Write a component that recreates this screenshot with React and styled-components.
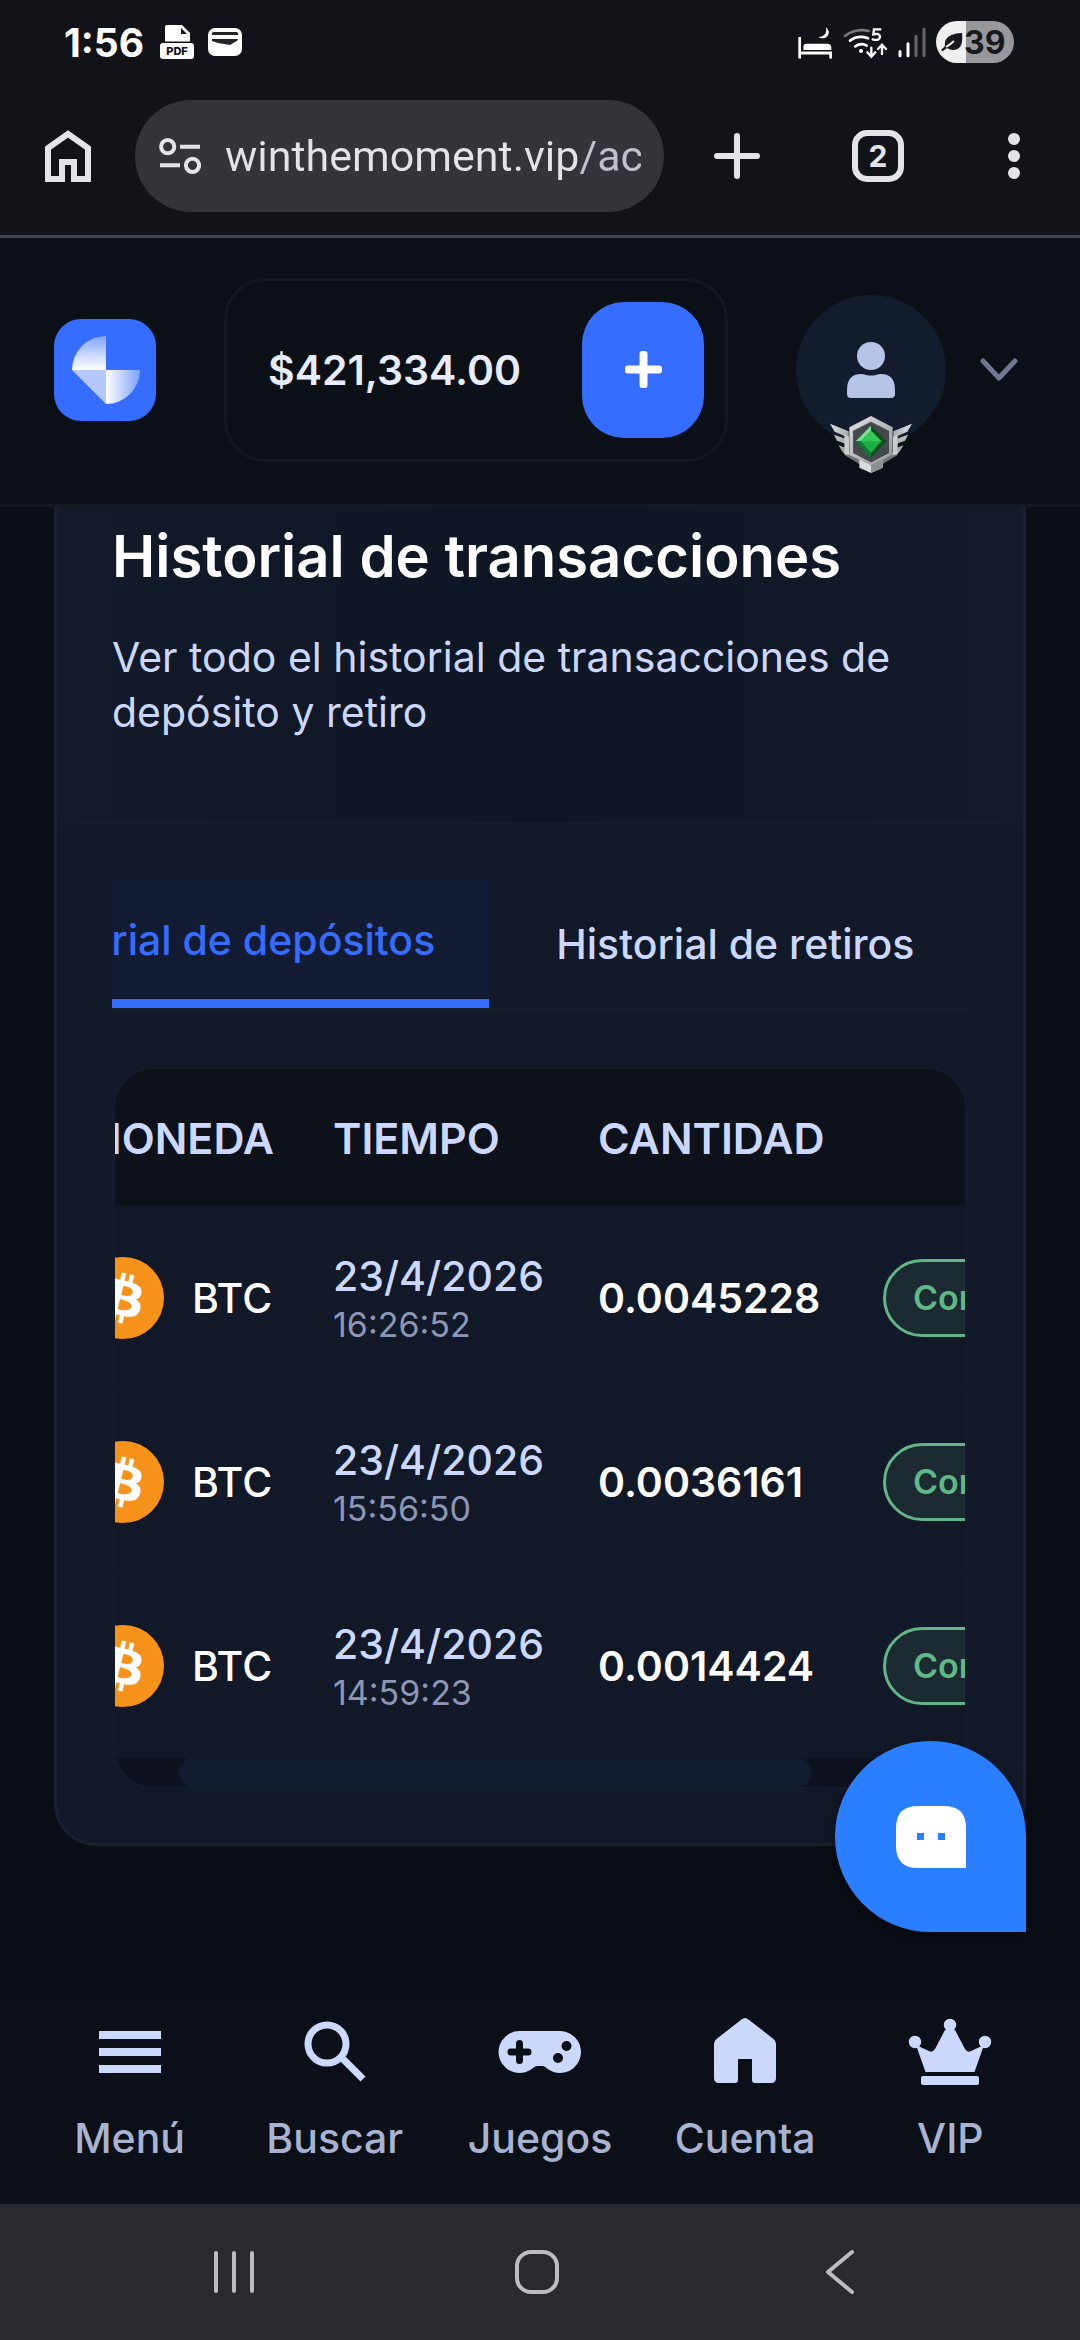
import React, { useLayoutEffect, useRef } from 'react'
import styled, { createGlobalStyle } from 'styled-components';

const GlobalStyle = createGlobalStyle`
  * {
    box-sizing: border-box;
  }

  body {
    background-color: #0a0e15;
    font-family: Inter, "Liberation Sans", sans-serif;
    margin: 0;
  }

  button, input {
    background: none;
    border: none;
    color: inherit;
    font: inherit;
    margin: 0;
    outline: none;
    padding: 0;
  }

  button {
    cursor: pointer;
  }

  svg {
    display: block;
    flex-shrink: 0;
  }
`;

const Page = styled.div`
  display: flex;
  flex-direction: column;
  min-height: 100vh;
`;

const BrowserTop = styled.div`
  background-color: #121318;
  border-bottom: 3px solid #44464f;
`;

const StatusBar = styled.div`
  align-items: center;
  color: #ffffff;
  display: flex;
  height: 84px;
  justify-content: space-between;
  padding: 0 66px 0 64px;

  & .group {
    align-items: center;
    display: flex;
    gap: 10px;
  }

  & .apps {
    gap: 14px;
  }

  & .time {
    font-size: 39px;
    font-weight: 700;
    margin-right: 2px;
  }
`;

const Battery = styled.div`
  align-items: center;
  background: linear-gradient(90deg, #efeff0 30px, #98989c 30px);
  border-radius: 21px;
  color: #17181c;
  display: flex;
  font-size: 32px;
  font-weight: 700;
  gap: 1px;
  height: 42px;
  padding-left: 5px;
  width: 78px;
`;

const Toolbar = styled.div`
  align-items: center;
  color: #e3e3e9;
  display: flex;
  height: 151px;
  justify-content: space-between;
  padding: 0 60px 7px 45px;

  & .actions {
    align-items: center;
    display: flex;
    gap: 92px;
  }
`;

const UrlBar = styled.label`
  align-items: center;
  background-color: #33343a;
  border-radius: 56px;
  display: flex;
  flex: 1;
  gap: 24px;
  height: 112px;
  margin: 0 50px 0 44px;
  min-width: 0;
  padding: 0 23px 0 24px;

  & input {
    background: linear-gradient(90deg, #e3e3e9 352px, #c0c1cc 352px);
    background-clip: text;
    color: transparent;
    flex: 1;
    font-family: Roboto, Inter, sans-serif;
    font-size: 43px;
    height: 60px;
    min-width: 0;
  }
`;

const TabCount = styled.button`
  border: 6px solid #e3e3e9;
  border-radius: 15px;
  font-size: 30px;
  font-weight: 700;
  height: 52px;
  line-height: 40px;
  width: 52px;
`;

const AppHeader = styled.header`
  align-items: center;
  background-color: #0b0f16;
  border-bottom: 3px solid #141920;
  display: flex;
  height: 269px;
  justify-content: space-between;
  padding: 0 62px 3px 54px;
`;

const Balance = styled.div`
  align-items: center;
  border: 3px solid #141920;
  border-radius: 42px;
  color: #e8ecff;
  display: flex;
  font-size: 41px;
  font-weight: 600;
  justify-content: space-between;
  padding: 21px 21px 21px 41px;
  width: 504px;
`;

const AddButton = styled.button`
  background-color: #346dff;
  border-radius: 42px;
  display: flex;
  align-items: center;
  justify-content: center;
  height: 136px;
  width: 122px;
`;

const Profile = styled.button`
  align-items: center;
  display: flex;
  gap: 34px;

  & .avatar {
    align-items: center;
    background-color: #131c2d;
    border-radius: 50%;
    display: flex;
    height: 150px;
    justify-content: center;
    position: relative;
    width: 150px;
  }

  & .rank {
    bottom: -28px;
    left: 34px;
    position: absolute;
  }
`;

const Main = styled.main`
  flex: 1;
  padding: 0 54px 80px;
`;

const Card = styled.section`
  background-color: #111827;
  border: 3px solid #182032;
  border-radius: 0 0 42px 42px;
  border-top: none;
`;

const CardHead = styled.div`
  background: linear-gradient(90deg, #121a2a, #0e1523 50%, #121a2a);
  border-bottom: 3px solid #141c2c;
  padding: 13px 55px 82px;

  & h1 {
    color: #ffffff;
    font-size: 58px;
    font-weight: 600;
    line-height: 72px;
    margin: 0 0 38px;
  }

  & p {
    color: #ccd8ff;
    font-size: 41px;
    line-height: 55px;
    margin: 0;
  }
`;

const CardBody = styled.div`
  padding: 55px 55px 53px;
`;

const Tabs = styled.div`
  border-bottom: 3px solid #151d2d;
  display: flex;
  gap: 13px;
  margin-bottom: 55px;
  overflow: hidden;
`;

const Tab = styled.button`
  background-color: ${(props) => (props.$active ? "#131b33" : "transparent")};
  border-bottom: ${(props) => (props.$active ? "9px solid #346dff" : "none")};
  color: ${(props) => (props.$active ? "#346dff" : "#ccd8ff")};
  flex-shrink: 0;
  font-size: 41px;
  font-weight: 500;
  height: 128px;
  padding: 0 54px;
  white-space: nowrap;
`;

const TableBox = styled.div`
  border: 3px solid #131b2b;
  border-radius: 42px;
  overflow: hidden;
`;

const TableScroll = styled.div`
  overflow: hidden;
`;

const Table = styled.table`
  border-collapse: collapse;
  table-layout: fixed;
  width: 1143px;

  & th, & td {
    padding: 0 28px;
    text-align: left;
    white-space: nowrap;
  }

  & th:first-child, & td:first-child {
    padding-left: 53px;
  }

  & th {
    background-color: #0c111a;
    color: #ccd8ff;
    font-size: 43px;
    font-weight: 600;
    height: 137px;
  }

  & th:last-child {
    text-align: right;
  }

  & td {
    height: 184px;
  }

  & tr + tr td {
    box-shadow: inset 0 2px #131b2b;
  }
`;

const Coin = styled.div`
  align-items: center;
  color: #ffffff;
  display: flex;
  font-size: 41px;
  font-weight: 500;
  gap: 28px;
`;

const DateText = styled.div`
  color: #ccd8ff;
  font-size: 41px;
  font-weight: 500;
  line-height: 54px;
`;

const TimeText = styled.div`
  color: #8d96b5;
  font-size: 34px;
  line-height: 44px;
`;

const Amount = styled.span`
  color: #ffffff;
  font-size: 41px;
  font-weight: 600;
`;

const Status = styled.span`
  align-items: center;
  background-color: #1a2a30;
  border: 3px solid #62b587;
  border-radius: 39px;
  color: #5fb987;
  display: inline-flex;
  font-size: 34px;
  font-weight: 600;
  height: 78px;
  padding: 0 27px 2px;
  vertical-align: middle;
`;

const ScrollTrack = styled.div`
  background-color: #0d121e;
  display: flex;
  height: 29px;
  padding: 0 64px;

  & span {
    background-color: #121b2d;
    border-radius: 14px;
    width: 632px;
  }
`;

const ChatButton = styled.button`
  align-items: center;
  background-color: #297fff;
  border-radius: 50% 50% 0 50%;
  bottom: 408px;
  box-shadow: 0 6px 18px rgba(0, 0, 0, 0.35);
  display: flex;
  height: 191px;
  justify-content: center;
  position: fixed;
  right: 54px;
  width: 191px;
`;

const BottomNav = styled.nav`
  background-color: #0b0f17;
  display: grid;
  grid-template-columns: repeat(5, 1fr);
  padding: 10px 27px 40px;

  & a {
    align-items: center;
    color: #a8b2d1;
    display: flex;
    flex-direction: column;
    font-size: 41px;
    font-weight: 500;
    gap: 18px;
    line-height: 52px;
    text-decoration: none;
  }

  & svg {
    color: #ccd9ff;
  }
`;

const SystemBar = styled.div`
  align-items: center;
  background-color: #292a2e;
  color: #bdbdc0;
  display: grid;
  grid-template-columns: repeat(3, 1fr);
  height: 136px;
  justify-items: center;
  padding: 0 88px 0 82px;
`;

const rows = [
  { date: "23/4/2026", time: "16:26:52", amount: "0.0045228" },
  { date: "23/4/2026", time: "15:56:50", amount: "0.0036161" },
  { date: "23/4/2026", time: "14:59:23", amount: "0.0014424" },
];

const PdfIcon = () => (
  <svg width="34" height="34" viewBox="0 0 34 34">
    <path fill="#fff" d="M7 0h15l8 8v8.500H5V2a2 2 0 0 1 2-2z" />
    <path fill="#121318" d="M21 3v6h6z" />
    <rect y="18" width="34" height="16" rx="3" fill="#fff" />
    <text x="17" y="30" textAnchor="middle" fill="#121318" fontFamily="Inter, sans-serif" fontSize="11" fontWeight="800">PDF</text>
  </svg>
);

const WalletIcon = () => (
  <svg width="34" height="28" viewBox="0 0 34 28">
    <rect width="34" height="28" rx="7" fill="#fff" />
    <path d="M5 4h24q2 1 1 3H4q-1-2 1-3zM4 11h26q0 2-3 3l-5 3-12-2-6-2z" fill="#23242a" />
  </svg>
);

const BedIcon = () => (
  <svg width="35" height="33" viewBox="18 35 104 97" fill="#fff">
    <path d="M19 67h8v43h92v21h-8v-12H27v12h-8z" />
    <path d="M34 106V96q0-9 9-9h62q12 0 12 12v7z" />
    <path d="M101 38q14 12 6 25-11 14-29 4 16 0 22-11 4-8 1-18z" />
  </svg>
);

const WifiIcon = () => (
  <svg width="45" height="33" viewBox="163 36 135 99" fill="none" stroke="#fff" strokeWidth="8" strokeLinecap="round">
    <path d="M169 66Q200 42 240 51" stroke="#77787c" />
    <path d="M184 80Q208 62 238 73M200 97Q218 85 234 95" />
    <circle cx="217" cy="111" r="6" fill="#fff" stroke="none" />
    <path d="M248 101v26m-12-12l12 13 12-13M280 120V93m-12 12l12-13 12 13" strokeWidth="7" />
    <path d="M275 46h-19l-2 15q18-5 20 7-1 14-22 8" strokeWidth="7" />
  </svg>
);

const SignalIcon = () => (
  <svg width="28" height="31" viewBox="322 37 84 92" strokeWidth="9" strokeLinecap="round">
    <path d="M328 110v13M352 87v36" stroke="#fff" />
    <path d="M376 64v59M400 43v80" stroke="#66676c" />
  </svg>
);

const LeafIcon = () => (
  <svg width="22" height="19" viewBox="0 0 22 19">
    <path fill="#17181c" d="M21 0Q23 17 12 17q-3 0-6-2l-4 3q-3 0-1-2l3-3Q2 1 21 0z" />
    <path d="M5 14q5-3 8-6" stroke="#efeff0" strokeWidth="2" fill="none" />
  </svg>
);

const HomeOutline = () => (
  <svg width="46" height="52" viewBox="0 0 46 52" fill="none" stroke="currentColor" strokeWidth="6">
    <path d="M3 49V18L23 4l20 14v31H29V32H17v17z" />
  </svg>
);

const TuneIcon = () => (
  <svg width="42" height="36" viewBox="0 0 42 36" fill="none" stroke="#e3e3e9" strokeWidth="4">
    <circle cx="8.700" cy="8.700" r="6.600" />
    <circle cx="33.500" cy="27.300" r="6.600" />
    <path d="M21 8.700h20M1 27.300h20" />
  </svg>
);

const Logo = () => (
  <svg width="102" height="102" viewBox="0 0 102 102">
    <defs>
      <linearGradient id="top" x1="0" y1="0" x2="0" y2="1">
        <stop offset="0" stopColor="#84a6ff" />
        <stop offset="1" stopColor="#fff" />
      </linearGradient>
      <linearGradient id="side">
        <stop offset="0" stopColor="#fff" />
        <stop offset="1" stopColor="#7ea2ff" />
      </linearGradient>
    </defs>
    <rect width="102" height="102" rx="27" fill="#346dff" />
    <path d="M52 51V17A34 34 0 0 0 18 51z" fill="url(#top)" />
    <path d="M18 51h34v34z" fill="#b5c8ff" />
    <path d="M52 51h34a34 34 0 0 1-34 34z" fill="url(#side)" />
  </svg>
);

const RankBadge = () => (
  <svg className="rank" width="82" height="57" viewBox="54 48 246 171">
    <defs>
      <linearGradient id="steel" x1="0" y1="0" x2="1" y2="1">
        <stop offset="0" stopColor="#e2e4e5" />
        <stop offset="1" stopColor="#8c9093" />
      </linearGradient>
      <g id="wing">
        <path d="M54 71l56 23v19L68 95zM66 104l36 13v15l-27-10zM80 136l22 8v22l-12-12z" fill="url(#steel)" />
        <path d="M97 165l50 30v-22l-36-18z" fill="#6f7377" />
        <path d="M97 104l14 6v56l-14-4z" fill="#c9cccd" />
      </g>
    </defs>
    <use href="#wing" />
    <use href="#wing" transform="matrix(-1 0 0 1 354 0)" />
    <path d="M142 176h70v27l-35 16-35-16z" fill="#d9dbdc" />
    <path d="M177 190l35-14v27l-35 16z" fill="#8b8f92" />
    <path d="M177 48l65 34v83l-65 31-65-31V82z" fill="url(#steel)" />
    <path d="M177 64l56 28v68l-56 29-55-29V92z" fill="#45494d" stroke="#d5d7d8" strokeWidth="2" />
    <path d="M177 77l46 47-46 51-46-51z" fill="#07501c" />
    <path d="M177 77v16l-31 31h-15z" fill="#7be096" />
    <path d="M131 124h15l31 34v17z" fill="#0c7a2d" />
    <path d="M177 92l31 32-31 34-31-34z" fill="#1fae45" />
    <path d="M146 124l31-32 31 32z" fill="#35c95c" />
  </svg>
);

const BitcoinIcon = () => (
  <svg width="82" height="82" viewBox="0 0 32 32">
    <circle cx="16" cy="16" r="16" fill="#f7931a" />
    <path fill="#fff" d="M23.189 14.020c.314-2.096-1.283-3.223-3.465-3.975l.708-2.840-1.728-.43-.69 2.765c-.454-.114-.92-.22-1.385-.326l.695-2.783L15.596 6l-.708 2.839c-.376-.086-.746-.17-1.104-.26l.002-.009-2.384-.595-.46 1.846s1.283.294 1.256.312c.7.175.826.638.805 1.006l-.806 3.235c.048.012.11.030.18.057l-.183-.045-1.130 4.532c-.086.212-.303.531-.793.410.018.025-1.256-.313-1.256-.313l-.858 1.978 2.250.561c.418.105.828.215 1.231.318l-.715 2.872 1.727.43.708-2.840c.472.127.930.245 1.378.357l-.706 2.828 1.728.43.715-2.866c2.948.558 5.164.333 6.097-2.333.752-2.146-.037-3.385-1.588-4.192 1.130-.26 1.980-1.003 2.207-2.538zm-3.950 5.538c-.533 2.147-4.148.986-5.320.695l.950-3.805c1.172.293 4.929.872 4.370 3.110zm.535-5.569c-.487 1.953-3.495.960-4.470.717l.860-3.450c.975.243 4.118.696 3.610 2.733z" />
  </svg>
);

const MenuIcon = () => (
  <svg width="84" height="84" viewBox="0 0 84 84" fill="currentColor">
    <path d="M11 21h62v8H11zM11 38h62v8H11zM11 55h62v8H11z" />
  </svg>
);

const SearchIcon = () => (
  <svg width="84" height="84" viewBox="0 0 84 84" fill="none" stroke="currentColor" strokeWidth="7">
    <circle cx="34" cy="34" r="19" />
    <path d="M50 49l20 20" />
  </svg>
);

const GamepadIcon = () => (
  <svg width="84" height="84" viewBox="0 0 84 84">
    <path fill="currentColor" d="M21.500 21h41A21 21 0 1 1 47.500 57.200Q46 56 44 56h-4q-2 0-4 1.200A21 21 0 1 1 21.500 21z" />
    <path d="M21.500 33.500v17M13 42h17" stroke="#0b0f17" strokeWidth="7" strokeLinecap="round" />
    <circle cx="68.500" cy="36" r="5" fill="#0b0f17" />
    <circle cx="60" cy="48" r="5" fill="#0b0f17" />
  </svg>
);

const HouseIcon = () => (
  <svg width="84" height="84" viewBox="0 0 84 84" fill="currentColor">
    <path d="M38.500 9.500q3.500-3 7 0L70.500 29q2.500 2 2.500 5v34q0 5-5 5H52q-3 0-3-3V49H35v21q0 3-3 3H16q-5 0-5-5V34q0-3 2.500-5z" />
  </svg>
);

const CrownIcon = () => (
  <svg width="84" height="84" viewBox="0 0 84 84" fill="currentColor">
    <circle cx="7" cy="32" r="6.200" />
    <circle cx="42" cy="15" r="6.200" />
    <circle cx="77" cy="32" r="6.200" />
    <path d="M8 35l13 6q3.500 2 6-2l10-19h10l10 19q2.500 4 6 2l13-6-9.500 27H17.500z" />
    <rect x="13" y="66" width="58" height="9" rx="2" />
  </svg>
);

const navItems = [
  { label: "Menú", icon: <MenuIcon /> },
  { label: "Buscar", icon: <SearchIcon /> },
  { label: "Juegos", icon: <GamepadIcon /> },
  { label: "Cuenta", icon: <HouseIcon /> },
  { label: "VIP", icon: <CrownIcon /> },
];

const TopBars = () => (
  <BrowserTop>
    <StatusBar>
      <div className="group apps">
        <span className="time">1:56</span>
        <PdfIcon />
        <WalletIcon />
      </div>
      <div className="group">
        <BedIcon />
        <WifiIcon />
        <SignalIcon />
        <Battery><LeafIcon />39</Battery>
      </div>
    </StatusBar>
    <Toolbar>
      <button aria-label="Inicio"><HomeOutline /></button>
      <UrlBar>
        <TuneIcon />
        <input type="text" aria-label="Dirección" defaultValue="winthemoment.vip/ac" />
      </UrlBar>
      <div className="actions">
        <button aria-label="Nueva pestaña">
          <svg width="46" height="46" viewBox="0 0 46 46" stroke="currentColor" strokeWidth="6" strokeLinecap="round">
            <path d="M23 3v40M3 23h40" />
          </svg>
        </button>
        <TabCount>2</TabCount>
        <button aria-label="Más">
          <svg width="24" height="48" viewBox="-6 0 24 48" fill="currentColor">
            <circle cx="12" cy="7" r="6" />
            <circle cx="12" cy="24" r="6" />
            <circle cx="12" cy="41" r="6" />
          </svg>
        </button>
      </div>
    </Toolbar>
  </BrowserTop>
);

const Header = () => (
  <AppHeader>
    <a href="#inicio" aria-label="Inicio"><Logo /></a>
    <Balance>
      <span>$421,334.00</span>
      <AddButton aria-label="Depositar">
        <svg width="37" height="37" viewBox="0 0 37 37" fill="#fff">
          <rect x="14.500" width="8" height="37" rx="3" />
          <rect y="14.500" width="37" height="8" rx="3" />
        </svg>
      </AddButton>
    </Balance>
    <Profile aria-label="Perfil">
      <span className="avatar">
        <svg width="48" height="56" viewBox="0 0 48 56" fill="#b6c4e8">
          <circle cx="24" cy="14" r="14" />
          <path d="M0 48Q0 32 14 32q3 0 5 1 5 1 10 0 2-1 5-1 14 0 14 16v4q0 4-4 4H4q-4 0-4-4z" />
        </svg>
        <RankBadge />
      </span>
      <svg width="38" height="24" viewBox="0 0 38 24" fill="none" stroke="#717896" strokeWidth="5" strokeLinecap="round" strokeLinejoin="round">
        <path d="M3 3l16 17L35 3" />
      </svg>
    </Profile>
  </AppHeader>
);

const History = () => {
  const tabs = useRef(null);
  const table = useRef(null);

  useLayoutEffect(() => {
    tabs.current.scrollLeft = tabs.current.scrollWidth;
    table.current.scrollLeft = 86;
  }, []);

  return (
    <Card>
      <CardHead>
        <h1>Historial de transacciones</h1>
        <p>Ver todo el historial de transacciones de depósito y retiro</p>
      </CardHead>
      <CardBody>
        <Tabs ref={tabs}>
          <Tab $active>Historial de depósitos</Tab>
          <Tab>Historial de retiros</Tab>
        </Tabs>
        <TableBox>
          <TableScroll ref={table}>
            <Table>
              <colgroup>
                <col width="276" />
                <col width="265" />
                <col width="285" />
                <col />
              </colgroup>
              <thead>
                <tr>
                  <th>MONEDA</th>
                  <th>TIEMPO</th>
                  <th>CANTIDAD</th>
                  <th>ESTADO</th>
                </tr>
              </thead>
              <tbody>
                {rows.map((row) => (
                  <tr key={row.time}>
                    <td><Coin><BitcoinIcon />BTC</Coin></td>
                    <td>
                      <DateText>{row.date}</DateText>
                      <TimeText>{row.time}</TimeText>
                    </td>
                    <td><Amount>{row.amount}</Amount></td>
                    <td><Status>Completado</Status></td>
                  </tr>
                ))}
              </tbody>
            </Table>
          </TableScroll>
          <ScrollTrack><span /></ScrollTrack>
        </TableBox>
      </CardBody>
    </Card>
  );
};

export default function App() {
  return (
    <>
      <GlobalStyle />
      <Page>
        <TopBars />
        <Header />
        <Main>
          <History />
        </Main>
        <BottomNav>
          {navItems.map((item) => (
            <a href="#nav" key={item.label}>{item.icon}{item.label}</a>
          ))}
        </BottomNav>
        <SystemBar>
          <button aria-label="Recientes">
            <svg width="44" height="44" viewBox="0 0 44 44" stroke="currentColor" strokeWidth="4" strokeLinecap="round">
              <path d="M4 3v38M22 3v38M40 3v38" />
            </svg>
          </button>
          <button aria-label="Inicio">
            <svg width="46" height="46" viewBox="0 0 46 46" fill="none" stroke="currentColor" strokeWidth="4">
              <rect x="3" y="3" width="40" height="40" rx="14" />
            </svg>
          </button>
          <button aria-label="Atrás">
            <svg width="30" height="46" viewBox="0 0 30 46" fill="none" stroke="currentColor" strokeWidth="4" strokeLinecap="round" strokeLinejoin="round">
              <path d="M27 3L3 23l24 20" />
            </svg>
          </button>
        </SystemBar>
      </Page>
      <ChatButton aria-label="Chat">
        <svg width="70" height="62" viewBox="0 0 70 62">
          <path fill="#fff" d="M22 0h26q22 0 22 22v40H22Q0 62 0 40V22Q0 0 22 0z" />
          <path fill="#297fff" d="M21 27h7v7h-7zM42 27h7v7h-7z" />
        </svg>
      </ChatButton>
    </>
  );
}
